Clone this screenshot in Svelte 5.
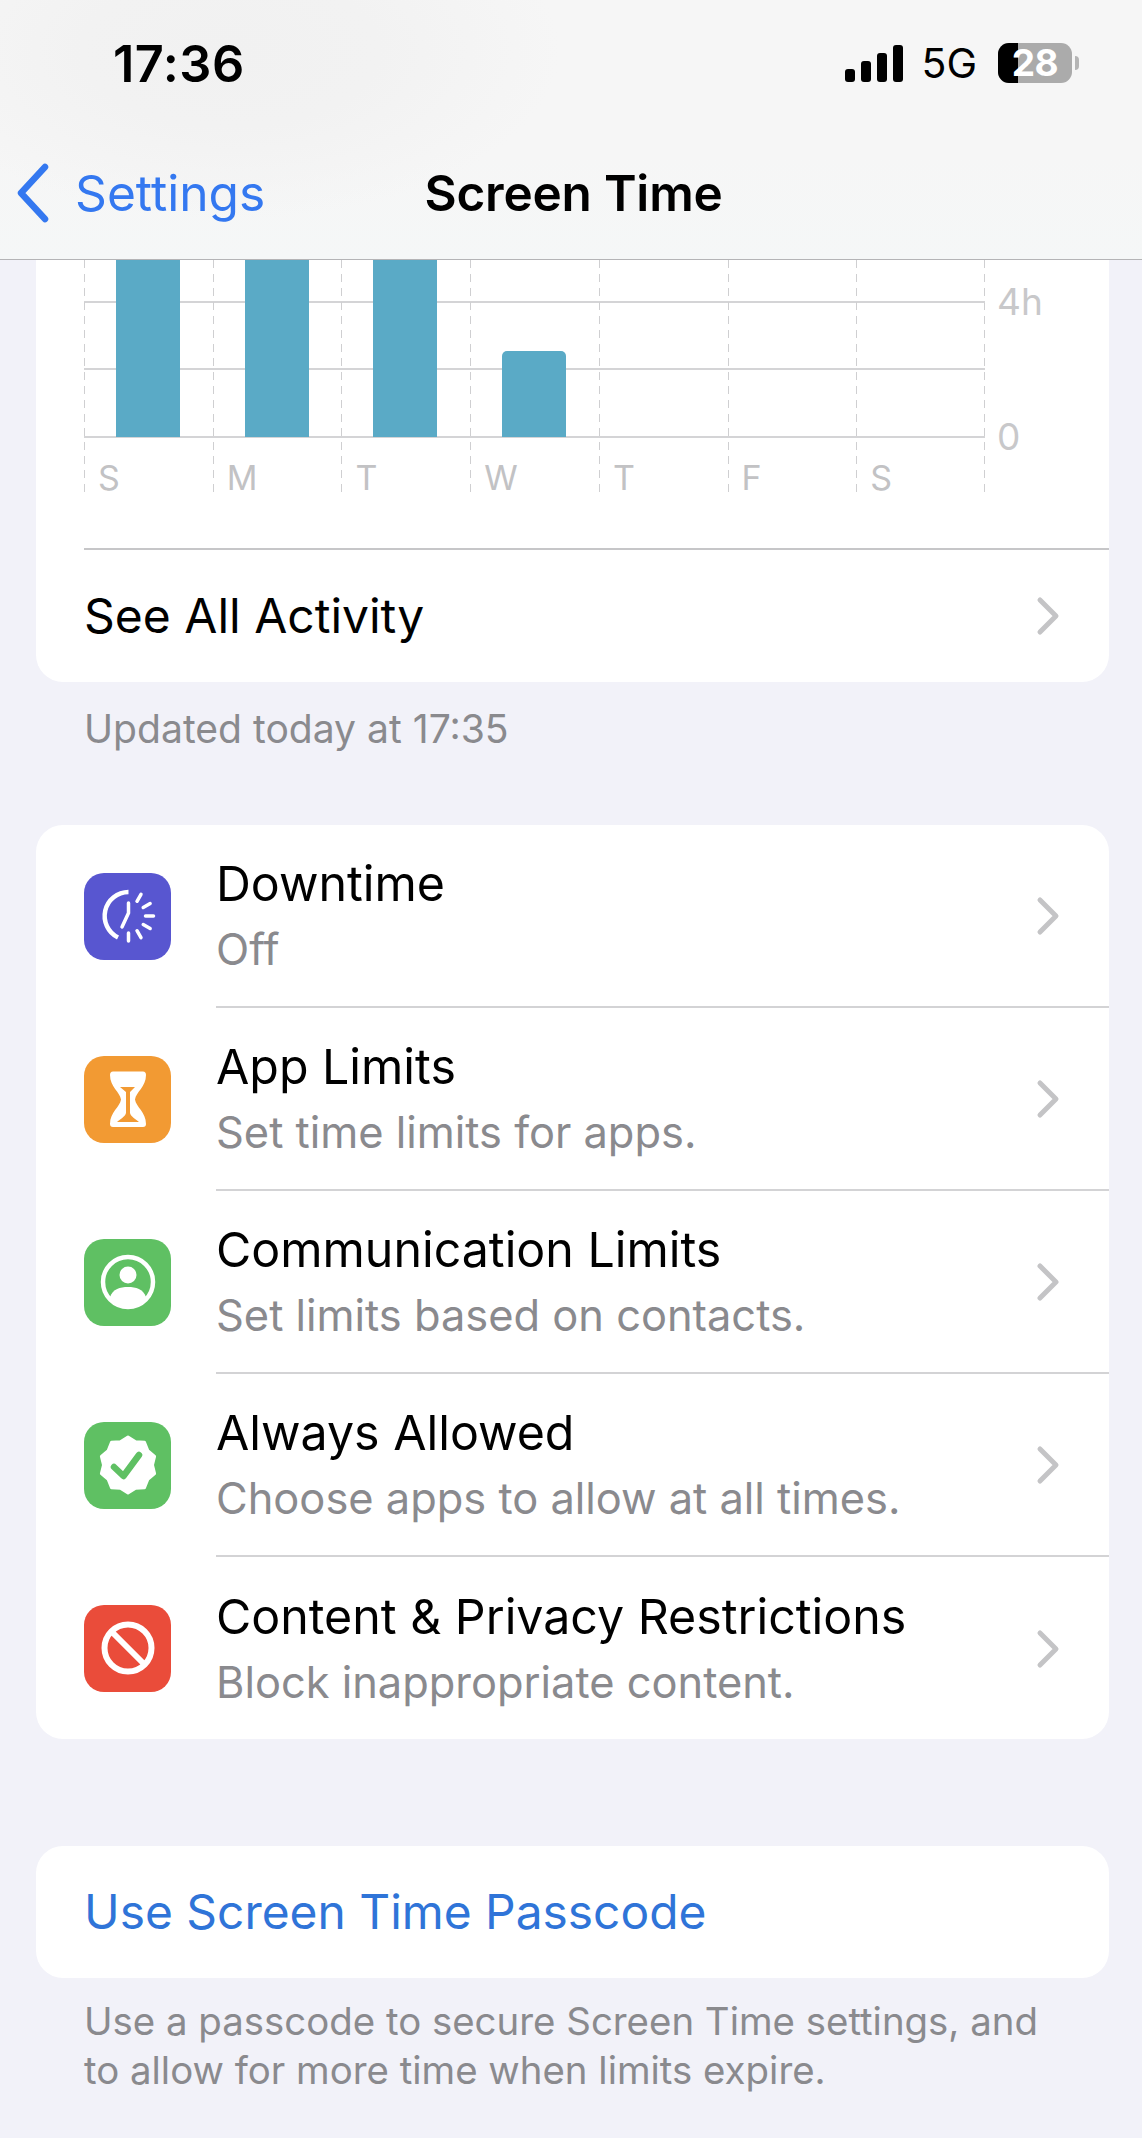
<script>
  const ticks = [30, 60, 90, 120, 150, 180];
  const days = ['S', 'M', 'T', 'W', 'T', 'F', 'S'];
  const bars = [null, null, null, null];
  const rows = [
    { id: 'down', title: 'Downtime', sub: 'Off' },
    { id: 'app', title: 'App Limits', sub: 'Set time limits for apps.' },
    { id: 'comm', title: 'Communication Limits', sub: 'Set limits based on contacts.' },
    { id: 'always', title: 'Always Allowed', sub: 'Choose apps to allow at all times.' },
    { id: 'content', title: 'Content & Privacy Restrictions', sub: 'Block inappropriate content.' }
  ];
  function badge() {
    const n = 10, pts = [];
    for (let i = 0; i < n * 2; i++) {
      const r = i % 2 ? 24.5 : 28;
      const a = (Math.PI * i) / n - Math.PI / 2;
      pts.push(`${(44 + r * Math.cos(a)).toFixed(1)},${(43 + r * Math.sin(a)).toFixed(1)}`);
    }
    return pts.join(' ');
  }
</script>

{#snippet chevron()}
  <svg class="chev" viewBox="0 0 24 40" aria-hidden="true"><path d="M4 4 L20 20 L4 36" /></svg>
{/snippet}

<div class="page">
  <header class="head">
    <div class="status">
      <span class="time">17:36</span>
      <div class="right">
        <div class="signal"><i class="b1"></i><i class="b2"></i><i class="b3"></i><i class="b4"></i></div>
        <span class="net">5G</span>
        <div class="batt"><div class="fill"></div><span class="pct">28</span></div>
        <div class="nub"></div>
      </div>
    </div>
    <nav class="nav">
      <div class="back">
        <svg class="backicon" viewBox="0 0 36 60" aria-hidden="true"><path d="M30 4 L6 30 L30 56" /></svg>
        <span>Settings</span>
      </div>
      <h1>Screen Time</h1>
    </nav>
  </header>

  <main class="content">
    <section class="card chartcard">
      <div class="chart">
        <div class="plot">
          <div class="hline h1"></div>
          <div class="hline h2"></div>
          <div class="hline h3"></div>
          <span class="ylabel y1">4h</span>
          <span class="ylabel y2">0</span>
          {#each days as d, i}
            <div class="col">
              <span class="day">{d}</span>
              {#if i < bars.length}
                <div class="bar" class:short={i === 3}></div>
              {/if}
            </div>
          {/each}
        </div>
      </div>
      <div class="seeall">
        <span>See All Activity</span>
        {@render chevron()}
      </div>
    </section>
    <p class="note updated">Updated today at 17:35</p>

    <section class="card list">
      {#each rows as r}
        <div class="row">
          <div class="icon {r.id}">
            <svg viewBox="0 0 87 87" aria-hidden="true">
              {#if r.id === 'down'}
                <path class="w4" d="M44.5 19 A24 24 0 0 0 34 64.5" />
                <path class="w3" d="M44.5 30 V40 L38 54" />
                {#each ticks as t}
                  <line class="w3" x1="44.5" y1="26" x2="44.5" y2="18" transform="rotate({t} 44.5 43)" />
                {/each}
              {:else if r.id === 'app'}
                <path class="wf" d="M26 19 Q26 15.5 29 15.5 H59 Q62 15.5 62 19 C62 31 52 36 51 43.5 C52 51 62 56 62 68 Q62 71 59 71 H29 Q26 71 26 68 C26 56 36 51 37 43.5 C36 36 26 31 26 19Z" />
                <path class="of" d="M36 31 H51 L46 36 V57 C47 61 52 63 55 66 H33 C36 63 41 61 42 57 V36Z" />
              {:else if r.id === 'comm'}
                <circle class="w4" cx="44" cy="43" r="25" />
                <circle class="wf" cx="44" cy="36" r="8.5" />
                <path class="wf" d="M26 58 C29 50 36 48 44 48 C52 48 59 50 62 58 C57 64 51 67 44 67 C37 67 31 64 26 58Z" />
              {:else if r.id === 'always'}
                <polygon class="star" points={badge()} />
                <path class="chk" d="M30 45 L39.5 54 L55 33" />
              {:else}
                <circle class="w6" cx="44" cy="43" r="23.5" />
                <line class="w6" x1="27.5" y1="26.5" x2="60.5" y2="59.5" />
              {/if}
            </svg>
          </div>
          <div class="rowbody">
            <div class="rowtext">
              <div class="title">{r.title}</div>
              <div class="sub">{r.sub}</div>
            </div>
            {@render chevron()}
          </div>
        </div>
      {/each}
    </section>

    <section class="card pass">
      <span>Use Screen Time Passcode</span>
    </section>
    <p class="note foot">Use a passcode to secure Screen Time settings, and<br />to allow for more time when limits expire.</p>
  </main>
</div>

<style>
  :global(body) {
    margin: 0;
    background: #f2f2f9;
  }
  .page {
    width: 1142px;
    height: 2138px;
    overflow: hidden;
    background: #f2f2f9;
    font-family: Inter, "Noto Sans", sans-serif;
    color: #000;
    -webkit-font-smoothing: antialiased;
  }
  .head {
    height: 260px;
    box-sizing: border-box;
    background:
      radial-gradient(ellipse 330px 170px at 230px 50px, #f1f1f1 0%, #f2f2f2 45%, rgba(246, 246, 246, 0) 100%),
      linear-gradient(to bottom, #f6f6f6 60%, #f5f7f7 100%);
    border-bottom: 1px solid #b4b4b6;
    display: flex;
    flex-direction: column;
  }
  .status {
    height: 160px;
    display: flex;
    align-items: flex-start;
    justify-content: space-between;
    padding: 38px 63px 0 113px;
    box-sizing: border-box;
  }
  .time {
    font-size: 50.5px;
    font-weight: 600;
    line-height: 52px;
    letter-spacing: 0.5px;
  }
  .right {
    display: flex;
    align-items: center;
    height: 50px;
  }
  .signal {
    display: flex;
    align-items: flex-end;
    gap: 6px;
    height: 37px;
  }
  .signal i {
    display: block;
    width: 10px;
    background: #000;
    border-radius: 3px;
  }
  .b1 { height: 13px; }
  .b2 { height: 21px; }
  .b3 { height: 29px; }
  .b4 { height: 37px; }
  .net {
    margin-left: 18px;
    font-size: 41px;
    font-weight: 400;
    line-height: 44px;
  }
  .batt {
    margin-left: 21px;
    width: 74px;
    height: 40px;
    border-radius: 11px;
    background: #ababab;
    position: relative;
    display: flex;
    align-items: center;
    justify-content: center;
  }
  .fill {
    position: absolute;
    left: 0;
    top: 0;
    bottom: 0;
    width: 20px;
    background: #000;
    border-radius: 11px 0 0 11px;
  }
  .pct {
    position: relative;
    color: #fff;
    font-size: 37px;
    font-weight: 700;
    line-height: 40px;
    letter-spacing: -0.5px;
  }
  .nub {
    width: 4px;
    height: 14px;
    margin-left: 3px;
    background: #b5b5b5;
    border-radius: 0 4px 4px 0;
  }
  .nav {
    position: relative;
    height: 66px;
    display: flex;
    align-items: center;
    justify-content: center;
  }
  .back {
    position: absolute;
    left: 15px;
    top: 0;
    height: 66px;
    display: flex;
    align-items: center;
    gap: 24px;
    color: #3478f0;
    font-size: 49.7px;
  }
  .backicon {
    width: 36px;
    height: 60px;
    fill: none;
    stroke: #3478f0;
    stroke-width: 6.5;
    stroke-linecap: round;
    stroke-linejoin: round;
  }
  h1 {
    margin: 0 0 0 5px;
    font-size: 49.5px;
    font-weight: 600;
    letter-spacing: -0.2px;
  }
  .content {
    padding: 0 33px 0 36px;
  }
  .card {
    background: #fff;
    border-radius: 27px;
  }
  .chartcard {
    border-radius: 0 0 27px 27px;
    height: 422px;
    display: flex;
    flex-direction: column;
  }
  .chart {
    height: 289px;
    padding-left: 48px;
    box-sizing: border-box;
    position: relative;
  }
  .chart::after {
    content: "";
    position: absolute;
    left: 48px;
    right: 0;
    bottom: -1px;
    height: 2px;
    background: #c6c6c8;
  }
  .plot {
    position: relative;
    width: 901px;
    height: 236px;
    display: flex;
    background: repeating-linear-gradient(to bottom, #cfcfd1 0 8px, transparent 8px 14px) right top / 1px 100% no-repeat;
  }
  .col {
    position: relative;
    flex: 1;
    background: repeating-linear-gradient(to bottom, #cfcfd1 0 8px, transparent 8px 14px) left top / 1px 100% no-repeat;
  }
  .day {
    position: absolute;
    left: 14px;
    top: 199px;
    font-size: 34px;
    line-height: 38px;
    color: #c2c2c4;
  }
  .bar {
    position: absolute;
    left: 32px;
    top: 0;
    height: 177px;
    width: 64px;
    background: #5aaac6;
  }
  .bar.short {
    top: 91px;
    height: 86px;
    border-radius: 5px 5px 0 0;
  }
  .hline {
    position: absolute;
    left: 0;
    width: 901px;
    height: 2px;
    background: #d4d4d6;
  }
  .h1 { top: 41px; }
  .h2 { top: 108px; }
  .h3 { top: 176px; }
  .ylabel {
    position: absolute;
    left: 913px;
    font-size: 37px;
    line-height: 40px;
    color: #c8c8ca;
  }
  .y1 { top: 22px; }
  .y2 { top: 157px; }
  .seeall {
    flex: 1;
    display: flex;
    align-items: center;
    justify-content: space-between;
    padding: 0 49px 0 48px;
    font-size: 48px;
  }
  .chev {
    width: 24px;
    height: 40px;
    flex: none;
    fill: none;
    stroke: #c4c4c6;
    stroke-width: 5;
    stroke-linecap: round;
    stroke-linejoin: round;
  }
  .note {
    margin: 0;
    padding-left: 48px;
    line-height: 49px;
    color: #8a8a8e;
  }
  .updated {
    padding-top: 22px;
    font-size: 39.1px;
  }
  .list {
    margin-top: 72px;
    height: 914px;
    overflow: hidden;
  }
  .row {
    height: 183px;
    display: flex;
    align-items: center;
    padding-left: 48px;
  }
  .icon {
    flex: none;
    width: 87px;
    height: 87px;
    border-radius: 20px;
    margin-right: 45px;
    overflow: hidden;
  }
  .icon svg {
    display: block;
    width: 87px;
    height: 87px;
  }
  .down { background: #5856d0; }
  .app { background: #f29a33; }
  .comm { background: #5fc063; }
  .always { background: #5fc063; }
  .icon.content { background: #ea4c3a; padding: 0; }
  .w3, .w4, .w6 {
    fill: none;
    stroke: #fff;
    stroke-linecap: round;
    stroke-linejoin: round;
  }
  .w3 { stroke-width: 3.5; }
  .w4 { stroke-width: 4.5; stroke-linecap: butt; }
  .w6 { stroke-width: 6; stroke-linecap: butt; }
  .wf { fill: #fff; }
  .of { fill: #f29a33; }
  .star {
    fill: #fff;
    stroke: #fff;
    stroke-width: 3;
    stroke-linejoin: round;
  }
  .chk {
    fill: none;
    stroke: #5fc063;
    stroke-width: 6.5;
    stroke-linecap: round;
    stroke-linejoin: round;
  }
  .rowbody {
    flex: 1;
    align-self: stretch;
    display: flex;
    align-items: center;
    justify-content: space-between;
    padding-right: 49px;
    border-bottom: 2px solid #d3d3d5;
    box-sizing: border-box;
  }
  .row:last-child .rowbody {
    border-bottom: 0;
  }
  .rowtext {
    padding-bottom: 3px;
  }
  .title {
    font-size: 48.3px;
    line-height: 56px;
  }
  .sub {
    margin-top: 13px;
    font-size: 43.4px;
    line-height: 48px;
    color: #8a8a8e;
  }
  .pass {
    margin-top: 107px;
    height: 132px;
    display: flex;
    align-items: center;
    padding-left: 48px;
    font-size: 47.9px;
    color: #2f74d8;
  }
  .foot {
    padding-top: 19px;
    font-size: 38.4px;
  }
</style>
